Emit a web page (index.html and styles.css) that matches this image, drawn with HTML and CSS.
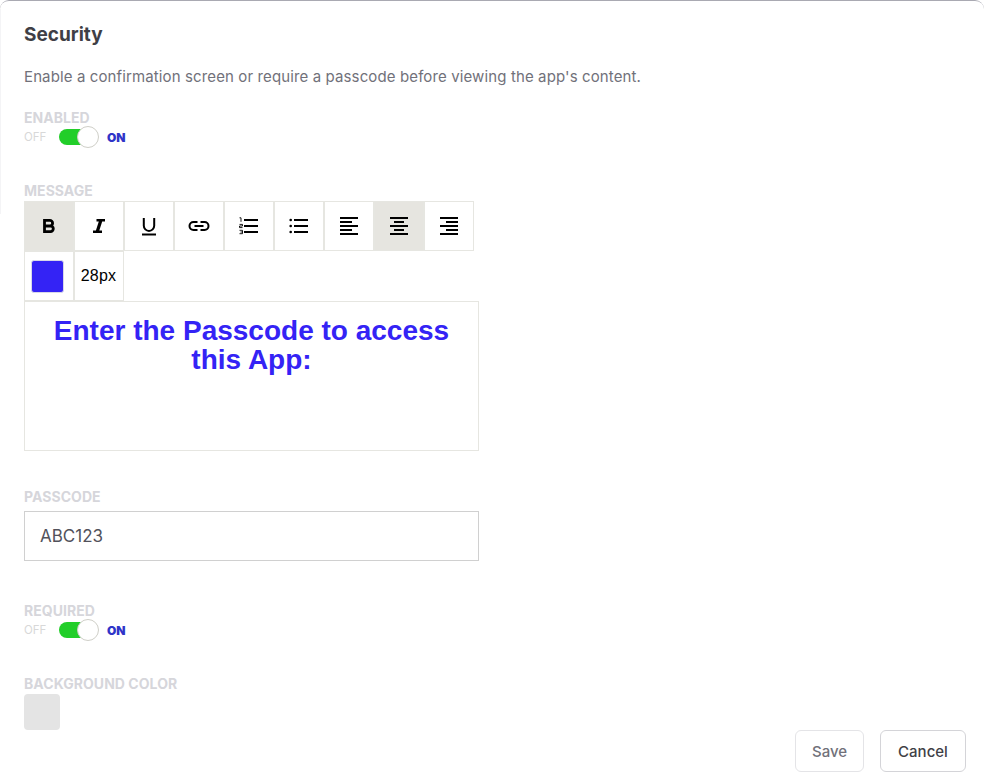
FILE: index.html
```html
<!DOCTYPE html>
<html lang="en">
<head>
<meta charset="utf-8">
<title>Security</title>
<link rel="stylesheet" href="styles.css">
</head>
<body>
<main class="panel">
  <h1 class="title">Security</h1>
  <p class="desc">Enable a confirmation screen or require a passcode before viewing the app's content.</p>

  <section class="field field-enabled">
    <div class="label">ENABLED</div>
    <div class="toggle-row">
      <span class="off">OFF</span>
      <span class="switch"><span class="knob"></span></span>
      <span class="on">ON</span>
    </div>
  </section>

  <section class="field field-message">
    <div class="label">MESSAGE</div>
    <div class="toolbar">
      <button class="tool active"><svg class="ic" viewBox="0 0 24 24"><path d="M7.500 6.400h5.300a2.800 2.800 0 0 1 0 5.600H7.500zM7.500 12h6a2.800 2.800 0 0 1 0 5.600h-6z" fill="none" stroke="#000" stroke-width="2.800"/></svg></button>
      <button class="tool"><svg class="ic" viewBox="0 0 24 24"><path d="M9.500 5h8.500v2.600h-2.800l-2.900 8.800h2.700V19H6v-2.600h2.900l2.900-8.800H9.500z" fill="#000"/></svg></button>
      <button class="tool"><svg class="ic" viewBox="0 0 24 24"><path d="M6.800 4v7.700a5.200 5.200 0 0 0 10.400 0V4" fill="none" stroke="#000" stroke-width="2"/><path d="M5 19.500h14v2H5z" fill="#000"/></svg></button>
      <button class="tool"><svg class="ic" viewBox="0 0 24 24"><path d="M10.500 8H6.500a4 4 0 0 0 0 8h4M13.500 8h4a4 4 0 0 1 0 8h-4M7.500 12h9" fill="none" stroke="#000" stroke-width="2"/></svg></button>
      <button class="tool"><svg class="ic" viewBox="0 0 24 24"><path d="M7 5h14v2H7zM7 11h14v2H7zM7 17h14v2H7z" fill="#000"/><path d="M2.500 3.800h1.500v4M2.500 10.400h3v1.600h-3v1.600h3M2.500 16.300h3v3.400h-3M3.500 18h2" fill="none" stroke="#000" stroke-width="0.900"/></svg></button>
      <button class="tool"><svg class="ic" viewBox="0 0 24 24"><path d="M7 5h14v2H7zM7 11h14v2H7zM7 17h14v2H7z" fill="#000"/><circle cx="3.700" cy="6" r="1.300"/><circle cx="3.700" cy="12" r="1.300"/><circle cx="3.700" cy="18" r="1.300"/></svg></button>
      <button class="tool"><svg class="ic" viewBox="0 0 24 24"><path d="M3 3h18v2H3zM3 7h12v2H3zM3 11h18v2H3zM3 15h12v2H3zM3 19h18v2H3z" fill="#000"/></svg></button>
      <button class="tool active"><svg class="ic" viewBox="0 0 24 24"><path d="M3 3h18v2H3zM7 7h10v2H7zM3 11h18v2H3zM7 15h10v2H7zM3 19h18v2H3z" fill="#000"/></svg></button>
      <button class="tool"><svg class="ic" viewBox="0 0 24 24"><path d="M3 3h18v2H3zM9 7h12v2H9zM3 11h18v2H3zM9 15h12v2H9zM3 19h18v2H3z" fill="#000"/></svg></button>
      <button class="tool tool-color"><span class="swatch"></span></button>
      <button class="tool size">28px</button>
    </div>
    <div class="editor">Enter the Passcode to access this App:</div>
  </section>

  <section class="field field-passcode">
    <div class="label">PASSCODE</div>
    <div class="input">ABC123</div>
  </section>

  <section class="field field-required">
    <div class="label">REQUIRED</div>
    <div class="toggle-row">
      <span class="off">OFF</span>
      <span class="switch"><span class="knob"></span></span>
      <span class="on">ON</span>
    </div>
  </section>

  <section class="field field-bg">
    <div class="label">BACKGROUND COLOR</div>
    <div class="bg-swatch"></div>
  </section>

  <footer class="actions">
    <button class="btn btn-save">Save</button>
    <button class="btn btn-cancel">Cancel</button>
  </footer>
</main>
</body>
</html>
```
FILE: styles.css
```css
* { box-sizing: border-box; }
html, body { margin: 0; padding: 0; height: 100%; background: #fff; }
body { overflow: hidden; font-family: Inter, "Liberation Sans", sans-serif; }
.panel {
  height: 777px;
  padding: 24px 18px 0 24px;
  border-top: 1px solid #a9a9b2;
  border-top-left-radius: 9px;
  border-top-right-radius: 9px;
  background: linear-gradient(#f4f4f6, #f4f4f6) 0 8px / 1px 205px no-repeat;
  display: flex;
  flex-direction: column;
}
.title { margin: 0; font-size: 19px; line-height: 20px; font-weight: 700; color: #3f3f46; }
.desc { margin: 22px 0 0; font-size: 15px; line-height: 20px; color: #71717a; letter-spacing: 0.12px; }
.field { display: flex; flex-direction: column; }
.label { font-size: 14px; line-height: 16px; font-weight: 700; color: #d6d6db; letter-spacing: 0.05px; }
.field-enabled { margin-top: 23px; }
.field-message { margin-top: 33px; }
.field-passcode { margin-top: 38px; }
.field-required { margin-top: 42px; }
.field-bg { margin-top: 33px; }
.toggle-row { display: flex; align-items: center; height: 22px; margin-bottom: 2px; }
.off { font-size: 11.500px; color: #d8d8d8; width: 35px; }
.switch { position: relative; width: 36px; height: 16px; background: #22ce29; border-radius: 8px; margin-right: 12px; }
.knob { position: absolute; right: -4px; top: -3px; width: 22px; height: 22px; border-radius: 50%; background: #fff; border: 1px solid #cfcfc8; }
.on { font-size: 12px; font-weight: 900; color: #2f35c8; letter-spacing: -0.1px; }
.toolbar { display: flex; flex-wrap: wrap; width: 450px; margin-top: 2px; }
.tool {
  width: 50px; height: 50px; padding: 0; margin: 0;
  display: flex; align-items: center; justify-content: center;
  background: #fff; border: 1px solid #e6e6e1;
  font-family: "Liberation Sans", sans-serif; font-size: 16px; color: #000;
}
.tool.active { background: #e6e5e0; }
.tool-color { padding-right: 3px; }
.size { padding-right: 1px; letter-spacing: 0.2px; }
.ic { width: 24px; height: 24px; display: block; }
.swatch { width: 33px; height: 33px; background: #3423f5; border-radius: 3px; border: 1px solid #d8d8e8; }
.editor {
  width: 455px; height: 150px; padding: 14px 12px 0;
  border: 1px solid #e6e6e1;
  font-family: "Liberation Sans", sans-serif; font-size: 28px; line-height: 29px; font-weight: 700;
  color: #3423f5; text-align: center;
}
.input {
  width: 455px; height: 50px; margin-top: 6px; padding: 0 15px;
  display: flex; align-items: center;
  border: 1px solid #d0d0d0; font-size: 17px; color: #52525b;
}
.bg-swatch { width: 36px; height: 36px; margin-top: 2px; background: #e4e4e4; border-radius: 4px; }
.actions { display: flex; justify-content: flex-end; gap: 16px; }
.btn {
  height: 42px; border-radius: 6px; background: #fff; padding: 0;
  font-family: Inter, sans-serif; font-size: 15px; font-weight: 500;
}
.btn-save { width: 69px; border: 1px solid #e4e4e7; color: #71717a; }
.btn-cancel { width: 86px; border: 1px solid #d4d4d8; color: #3f3f46; }
```
